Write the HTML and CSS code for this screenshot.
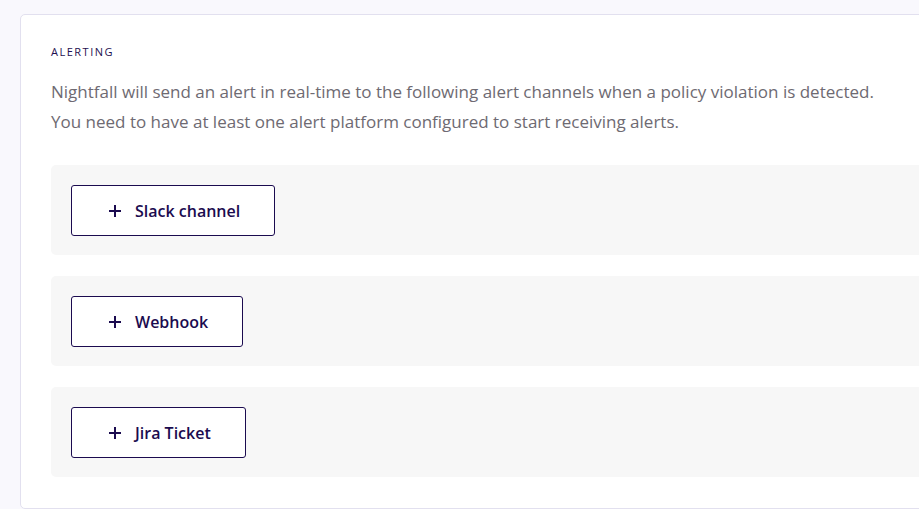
FILE: index.html
```html
<!DOCTYPE html>
<html lang="en">
<head>
<meta charset="utf-8">
<title>Alerting</title>
<link rel="stylesheet" href="styles.css">
</head>
<body>
<section class="card">
  <h2 class="label">ALERTING</h2>
  <p class="desc">Nightfall will send an alert in real-time to the following alert channels when a policy violation is detected.<br>You need to have at least one alert platform configured to start receiving alerts.</p>
  <div class="channels">
    <div class="channel">
      <button class="add-btn"><svg class="plus" width="14" height="14" viewBox="0 0 14 14"><path d="M7 1v12M1 7h12" stroke="currentColor" stroke-width="2" fill="none"/></svg><span>Slack channel</span></button>
    </div>
    <div class="channel">
      <button class="add-btn"><svg class="plus" width="14" height="14" viewBox="0 0 14 14"><path d="M7 1v12M1 7h12" stroke="currentColor" stroke-width="2" fill="none"/></svg><span>Webhook</span></button>
    </div>
    <div class="channel">
      <button class="add-btn"><svg class="plus" width="14" height="14" viewBox="0 0 14 14"><path d="M7 1v12M1 7h12" stroke="currentColor" stroke-width="2" fill="none"/></svg><span>Jira Ticket</span></button>
    </div>
  </div>
</section>
</body>
</html>
```

FILE: styles.css
```css
html, body {
  margin: 0;
  padding: 0;
  overflow: hidden;
}
body {
  background: #f9f8fd;
  font-family: "Open Sans", "Liberation Sans", sans-serif;
  padding: 14px 0 0 20px;
  width: 960px;
  box-sizing: border-box;
}
.card {
  background: #ffffff;
  border: 1px solid #e2e0ef;
  border-radius: 5px;
  padding: 30px 30px 31px 30px;
}
.label {
  margin: 0;
  font-size: 11px;
  font-weight: 400;
  letter-spacing: 1.5px;
  color: #1e1050;
  line-height: 14px;
}
.desc {
  margin: 18px 0 0 0;
  font-size: 17px;
  line-height: 30px;
  color: #6e6a72;
}
.channels {
  margin-top: 28px;
  display: flex;
  flex-direction: column;
  gap: 21px;
}
.channel {
  background: #f7f7f7;
  border-radius: 5px;
  height: 90px;
  padding: 20px;
  box-sizing: border-box;
  display: flex;
  align-items: flex-start;
}
.add-btn {
  height: 51px;
  display: inline-flex;
  align-items: center;
  gap: 13px;
  padding: 0 34px 0 36px;
  background: #ffffff;
  border: 1px solid #1b0b4f;
  border-radius: 3px;
  color: #1b0b4f;
  font-family: "Open Sans", "Liberation Sans", sans-serif;
  font-size: 16px;
  font-weight: 600;
}
.plus {
  display: block;
}
```
